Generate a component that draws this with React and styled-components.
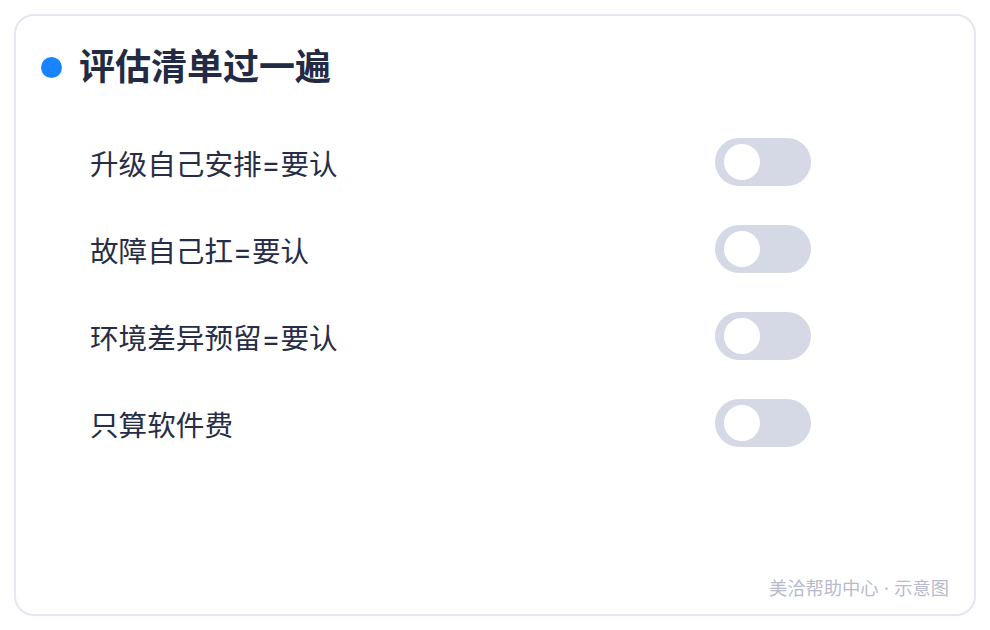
import React, { useState } from "react"
import styled, { createGlobalStyle } from "styled-components"

const GlobalStyle = createGlobalStyle`
  body {
    margin: 0;
    background: #ffffff;
    font-family: Inter, "Noto Sans CJK SC", sans-serif;
  }
`

const items = [
  "升级自己安排=要认",
  "故障自己扛=要认",
  "环境差异预留=要认",
  "只算软件费",
]

const Card = styled.div`
  box-sizing: border-box;
  margin: 14px;
  height: 602px;
  border: 2px solid #e4e7f1;
  border-radius: 20px;
  padding: 30px 25px 14px 25px;
  display: flex;
  flex-direction: column;
`

const Header = styled.div`
  display: flex;
  align-items: center;
  gap: 17px;
`

const Dot = styled.span`
  width: 21px;
  height: 21px;
  border-radius: 50%;
  background: #1a84ff;
`

const Title = styled.h2`
  margin: 0;
  font-size: 36px;
  line-height: 42px;
  font-weight: 700;
  color: #222a44;
`

const List = styled.div`
  margin-top: 50px;
  padding: 0 138px 0 49px;
  display: flex;
  flex-direction: column;
  gap: 39px;
`

const Row = styled.div`
  display: flex;
  align-items: center;
  justify-content: space-between;
  height: 48px;
`

const Label = styled.span`
  font-size: 28.6px;
  color: #272d47;
`

const Track = styled.button`
  position: relative;
  width: 96px;
  height: 48px;
  padding: 0;
  border: none;
  border-radius: 24px;
  background: ${(p) => (p.$on ? "#1a84ff" : "#d5d9e6")};
  cursor: pointer;
  transition: background 0.2s;
`

const Knob = styled.span`
  position: absolute;
  top: 6px;
  left: ${(p) => (p.$on ? "54px" : "9px")};
  width: 36px;
  height: 36px;
  border-radius: 50%;
  background: #ffffff;
  transition: left 0.2s;
`

const Footer = styled.div`
  margin-top: auto;
  text-align: right;
  font-size: 18.3px;
  line-height: 24px;
  color: #b7bbcc;
`

const Toggle = () => {
  const [on, setOn] = useState(false)
  return (
    <Track role="switch" aria-checked={on} $on={on} onClick={() => setOn(!on)}>
      <Knob $on={on} />
    </Track>
  )
}

export default function App() {
  return (
    <>
      <GlobalStyle />
      <Card>
        <Header>
          <Dot />
          <Title>评估清单过一遍</Title>
        </Header>
        <List>
          {items.map((text) => (
            <Row key={text}>
              <Label>{text}</Label>
              <Toggle />
            </Row>
          ))}
        </List>
        <Footer>美洽帮助中心 · 示意图</Footer>
      </Card>
    </>
  )
}
